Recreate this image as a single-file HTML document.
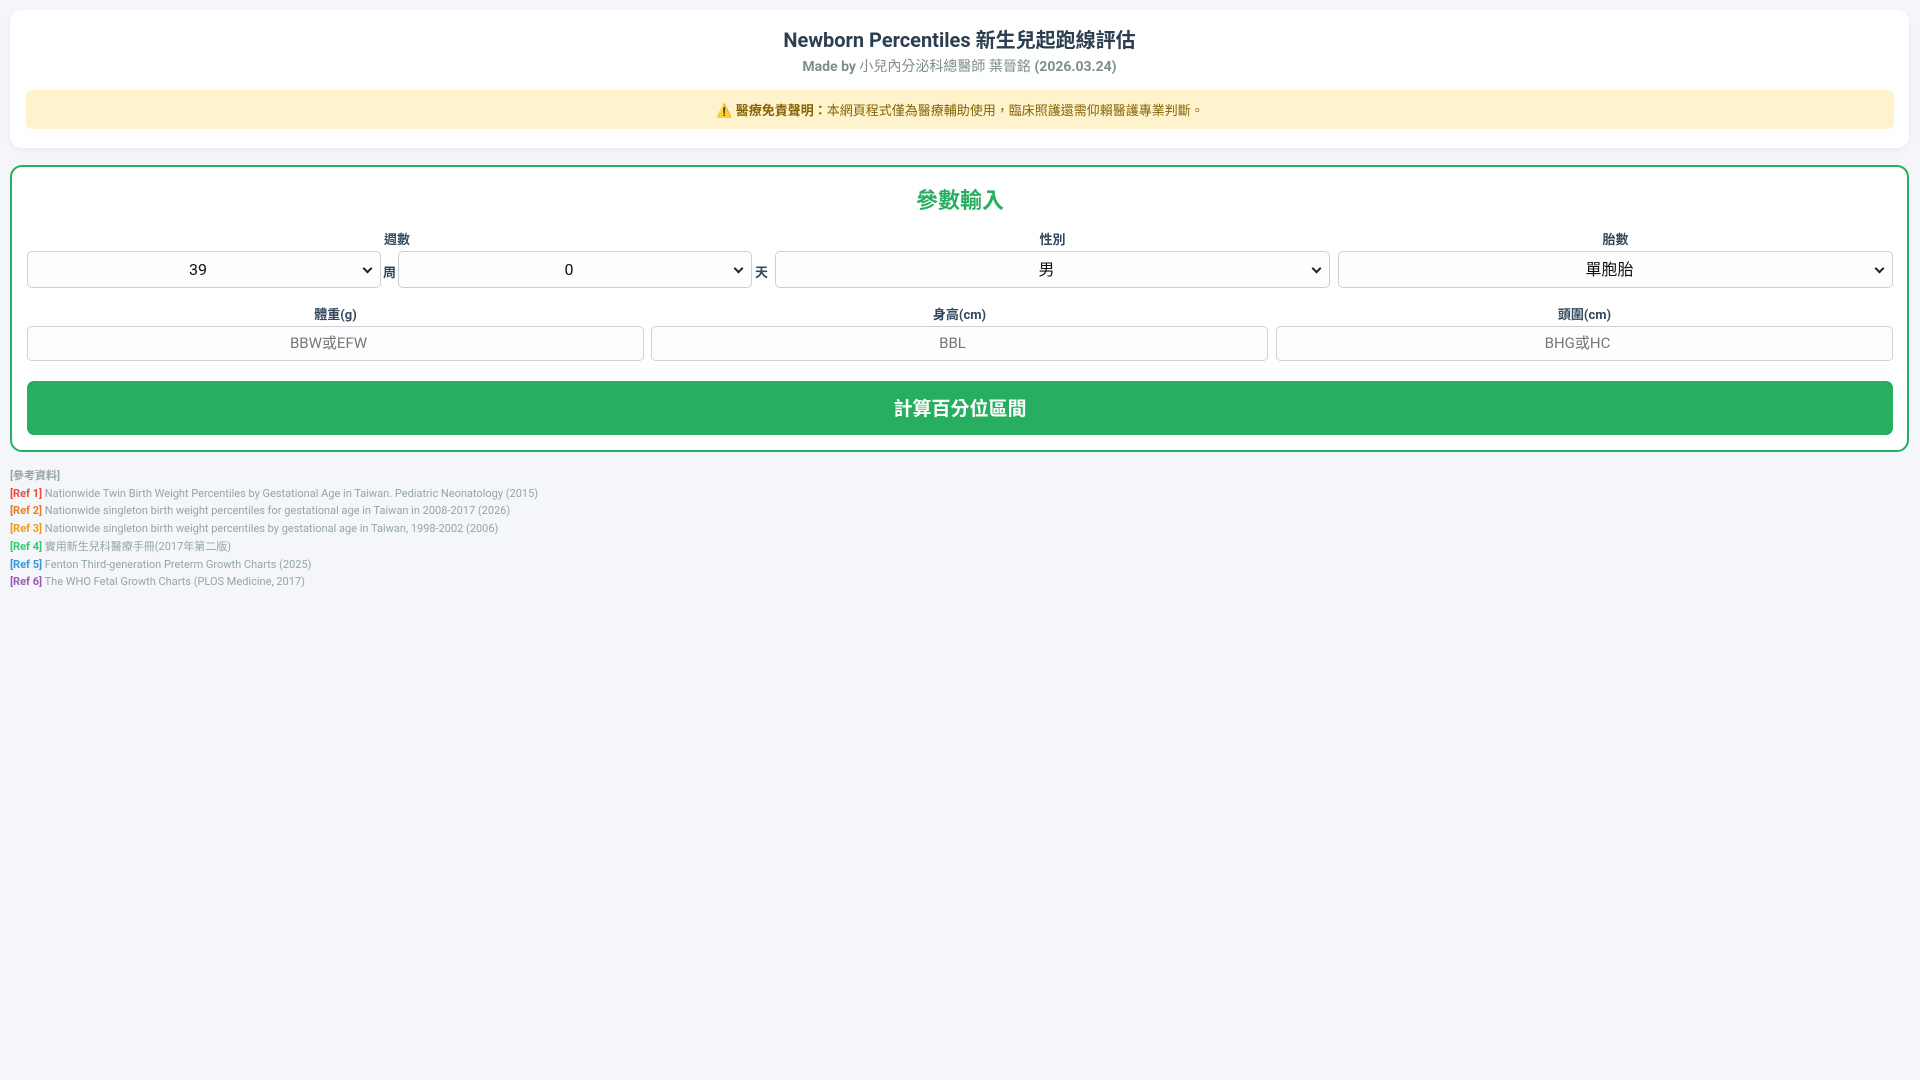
<!DOCTYPE html>
<html><head><meta charset="utf-8"><style>
*{box-sizing:border-box;margin:0;padding:0}
body{width:1920px;height:1080px;background:#f4f6f9;font-family:"Roboto","Liberation Sans","Noto Sans CJK TC",sans-serif;position:relative;overflow:hidden}
.card1{position:absolute;left:10px;top:10px;width:1899px;height:138px;background:#fff;border-radius:12px;box-shadow:0 2px 6px rgba(0,0,0,.05)}
.t{position:absolute;left:0;right:0;top:14px;text-align:center;font-size:20px;font-weight:bold;color:#2c3e50}
.s{position:absolute;left:0;right:0;top:46px;text-align:center;font-size:14px;font-weight:bold;color:#7f8c8d}
.warn{position:absolute;left:16px;width:1868px;top:80px;height:39px;background:#fef3cd;border-radius:6px;text-align:center;line-height:44px;font-size:13px;color:#856404}
.card2{position:absolute;left:10px;top:165px;width:1899px;height:287px;background:#fff;border:2.5px solid #27ae60;border-radius:12px}
.h{position:absolute;left:0;right:0;text-align:center;font-size:22px;font-weight:bold;color:#27ae60}
.lab{position:absolute;font-size:13px;font-weight:bold;color:#34495e;text-align:center}
.sel,.inp{position:absolute;background:#fdfdfd;border:1px solid #ccd1d9;border-radius:5px;font-size:16px;color:#111;text-align:center}
.sel{top:251px;height:37px;line-height:35px;padding-right:12px}
.sel:after{content:"";position:absolute;right:9px;top:13px;width:5px;height:5px;border-right:2px solid #222;border-bottom:2px solid #222;transform:rotate(45deg)}
.inp{top:326px;height:35px;line-height:33px;color:#777;font-size:15px;padding-right:14px}
.u{position:absolute;top:262px;font-size:13px;font-weight:bold;color:#34495e}
.btn{position:absolute;left:27px;width:1866px;top:381px;height:54px;background:#27ae60;border-radius:7px;color:#fff;font-size:19px;font-weight:bold;text-align:center;line-height:56px}
.refs{position:absolute;left:10px;top:467px;font-size:11px;color:#95a5a6;line-height:17.7px}
</style></head><body>
<div class="card1">
<div class="t">Newborn Percentiles 新生兒起跑線評估</div>
<div class="s">Made by <span style="font-weight:normal">小兒內分泌科總醫師 葉晉銘</span> (2026.03.24)</div>
<div class="warn">⚠️ <b>醫療免責聲明：</b>本網頁程式僅為醫療輔助使用，臨床照護還需仰賴醫護專業判斷。</div>
</div>
<div class="card2"></div>
<div class="h" style="top:183px">參數輸入</div>
<div class="lab" style="left:27px;width:740px;top:229px">週數</div>
<div class="lab" style="left:775px;width:555px;top:229px">性別</div>
<div class="lab" style="left:1338px;width:555px;top:229px">胎數</div>
<div class="sel" style="left:27px;width:354px">39</div>
<div class="u" style="left:383px">周</div>
<div class="sel" style="left:398px;width:354px">0</div>
<div class="u" style="left:755px">天</div>
<div class="sel" style="left:775px;width:555px">男</div>
<div class="sel" style="left:1338px;width:555px">單胞胎</div>
<div class="lab" style="left:27px;width:617px;top:304px">體重(g)</div>
<div class="lab" style="left:651px;width:617px;top:304px">身高(cm)</div>
<div class="lab" style="left:1276px;width:617px;top:304px">頭圍(cm)</div>
<div class="inp" style="left:27px;width:617px">BBW或EFW</div>
<div class="inp" style="left:651px;width:617px">BBL</div>
<div class="inp" style="left:1276px;width:617px">BHG或HC</div>
<div class="btn">計算百分位區間</div>
<div class="refs">
<div><b>[參考資料]</b></div>
<div><b style="color:#e74c3c">[Ref 1]</b> Nationwide Twin Birth Weight Percentiles by Gestational Age in Taiwan. Pediatric Neonatology (2015)</div>
<div><b style="color:#e67e22">[Ref 2]</b> Nationwide singleton birth weight percentiles for gestational age in Taiwan in 2008-2017 (2026)</div>
<div><b style="color:#f39c12">[Ref 3]</b> Nationwide singleton birth weight percentiles by gestational age in Taiwan, 1998-2002 (2006)</div>
<div><b style="color:#2ecc71">[Ref 4]</b> 實用新生兒科醫療手冊(2017年第二版)</div>
<div><b style="color:#3498db">[Ref 5]</b> Fenton Third-generation Preterm Growth Charts (2025)</div>
<div><b style="color:#9b59b6">[Ref 6]</b> The WHO Fetal Growth Charts (PLOS Medicine, 2017)</div>
</div>
</body></html>
